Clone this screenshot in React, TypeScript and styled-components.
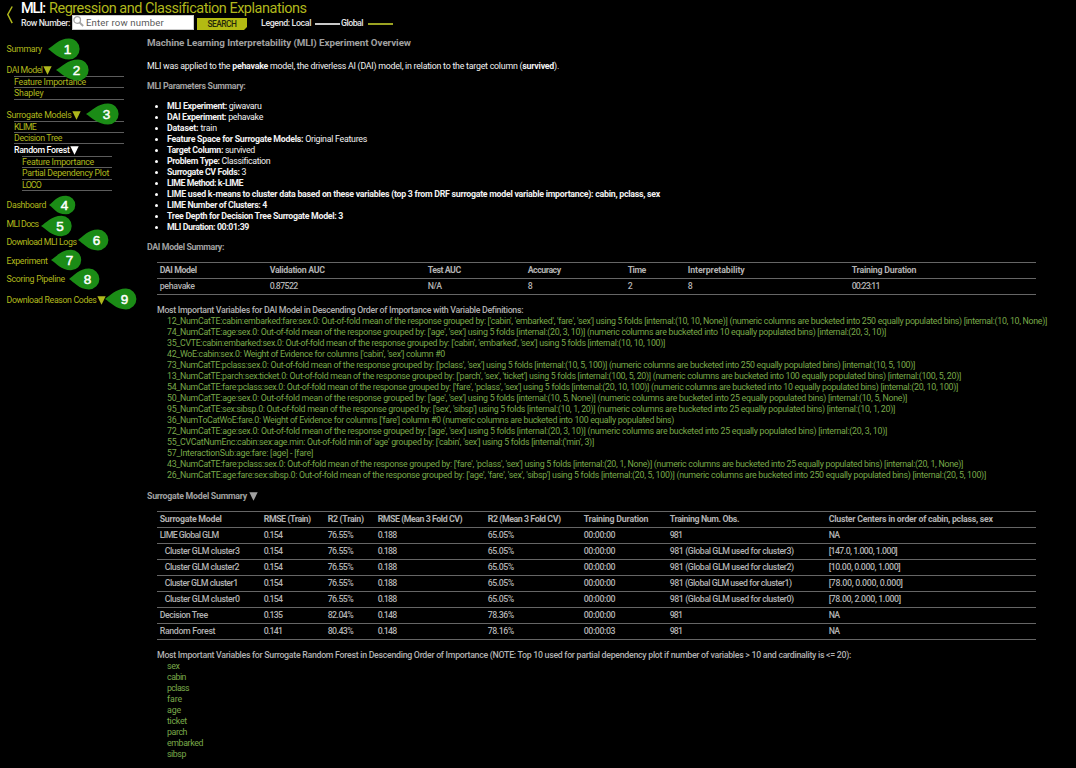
import React, { useLayoutEffect, useRef } from "react";
import styled, { createGlobalStyle } from "styled-components";

const lime = "#b0b81c";
const grey = "#b2b2b2";
const leaf = "#79a94a";

const GlobalStyle = createGlobalStyle`
  *, *::before, *::after { box-sizing: border-box; }
  html, body { margin: 0; background: #000; height: 768px; overflow: hidden; }
  body { font-family: Roboto, "Liberation Sans", sans-serif; font-size: 8.8px; color: #f2f2f2; }
`;

const Text = styled.span`
  display: inline-block;
  white-space: nowrap;
  flex: none;
`;

/* Tracks its text so that it spans the given width. */
function Fit({ w, children }: { w: number; children: React.ReactNode }) {
  const ref = useRef<HTMLSpanElement>(null);
  useLayoutEffect(() => {
    const el = ref.current;
    if (!el) return;
    el.style.letterSpacing = "0px";
    const natural = el.getBoundingClientRect().width;
    const count = Math.max(1, (el.textContent || "").length);
    el.style.letterSpacing = `${(w - natural) / count}px`;
  }, [w]);
  return <Text ref={ref}>{children}</Text>;
}

const Page = styled.div`
  width: 1076px;
  height: 768px;
  overflow: hidden;
  background: #000;
`;

const Header = styled.header`
  display: flex;
  height: 32px;
`;

const Back = styled.div`
  width: 21px;
  padding: 6px 0 0 6px;
`;

const HeaderBody = styled.div`
  display: flex;
  flex-direction: column;
`;

const Title = styled.h1`
  display: flex;
  gap: 4px;
  margin: 0;
  height: 15px;
  line-height: 18px;
  font-size: 14.5px;
  font-weight: 400;
  color: ${lime};
`;

const TitleLead = styled.span`
  color: #fff;
  font-weight: 500;
`;

const Tools = styled.div`
  display: flex;
  align-items: flex-start;
  height: 16px;
  line-height: 16px;
  font-weight: 500;
  color: #e4e4e4;
`;

const RowLabel = styled.label`
  width: 51px;
`;

const SearchBox = styled.div`
  display: flex;
  width: 122px;
  height: 15px;
  padding-left: 0;
  gap: 2px;
  background: #fff;
  border: 1px solid #ccc;
  color: #5a5a5a;
  font-size: 9.6px;
  font-weight: 400;
  line-height: 14px;
`;

const SearchButton = styled.button`
  width: 50px;
  height: 12px;
  margin: 3px 14px 0 3px;
  padding: 0;
  border: 0;
  background: #b3ba12;
  clip-path: polygon(0 0, 100% 0, 100% 9px, 47px 100%, 0 100%);
  color: #26280a;
  font: 500 8.4px/11px Roboto, sans-serif;
`;

const LegendLine = styled.span<{ $color: string; $left: number; $right: number }>`
  width: 25px;
  height: 2px;
  margin: 8px ${(p) => p.$right}px 0 ${(p) => p.$left}px;
  background: ${(p) => p.$color};
`;

const Body = styled.div`
  display: flex;
`;

const Nav = styled.nav`
  width: 147px;
  flex: none;
  color: ${lime};
`;

const NavItem = styled.div<{ $gap: number }>`
  position: relative;
  display: flex;
  align-items: center;
  height: 10px;
  margin: ${(p) => p.$gap}px 0 0 6.5px;
  line-height: 10px;
`;

const SubMenu = styled.div<{ $depth: number }>`
  width: ${(p) => (p.$depth === 1 ? 110 : 90)}px;
  margin: ${(p) => (p.$depth === 1 ? "1px 0 0 14px" : "0 0 0 8px")};
  border-top: 1px solid #5c5c5c;
`;

const SubItem = styled.div<{ $h: number; $active?: boolean }>`
  display: flex;
  height: ${(p) => p.$h}px;
  line-height: ${(p) => (p.$active ? 12 : 10)}px;
  align-items: ${(p) => (p.$active ? "center" : "flex-start")};
  border-bottom: ${(p) => (p.$active ? "0" : "1px solid #5c5c5c")};
  color: ${(p) => (p.$active ? "#fff" : "inherit")};
  font-weight: ${(p) => (p.$active ? 500 : 400)};
`;

const MarkerSvg = styled.svg<{ $x: number; $y: number }>`
  position: absolute;
  left: ${(p) => p.$x - 6.5}px;
  top: ${(p) => p.$y}px;
  z-index: 1;
  overflow: visible;
  font-family: "Liberation Sans", sans-serif;
`;

const Arrow = styled.svg`
  display: block;
  flex: none;
`;

function Caret() {
  return (
    <Arrow width="9" height="9" viewBox="0 0 9 9">
      <path d="M0.3 0.3H8.7L4.5 8.8Z" fill="currentColor" />
    </Arrow>
  );
}

/* Numbered teardrop; y is the offset from the row's middle, reach the tip-to-centre distance. */
function Marker({ n, x, y = 0, reach = 21, r = 10.6 }: { n: number; x: number; y?: number; reach?: number; r?: number }) {
  const c = 11;
  return (
    <MarkerSvg $x={x} $y={5 - c + y} width="33" height="22">
      <path
        d={`M0 ${c}C5 ${c - 3} ${reach - 10} ${c - r} ${reach} ${c - r}A${r} ${r} 0 0 1 ${reach} ${c + r}C${reach - 10} ${c + r} 5 ${c + 3} 0 ${c}Z`}
        fill="#1b8c16"
      />
      <text x={reach - 1.5} y={c + 4.9} textAnchor="middle" fontSize="13.5" fill="#fff" stroke="#fff" strokeWidth="0.5">
        {n}
      </text>
    </MarkerSvg>
  );
}

const Main = styled.main`
  flex: 1;
  min-width: 0;
`;

const Heading = styled.h2<{ $top: number; $size?: number }>`
  display: flex;
  align-items: center;
  gap: 2px;
  height: 12px;
  margin: ${(p) => p.$top}px 0 0;
  line-height: 12px;
  font-size: ${(p) => p.$size ?? 8.8}px;
  font-weight: 700;
  color: #a0a0a0;
`;

const Paragraph = styled.p`
  height: 12px;
  margin: 11px 0 0;
  line-height: 12px;
`;

const Params = styled.ul`
  margin: 9px 0 0;
  padding: 0;
  list-style: none;
`;

const Param = styled.li`
  display: flex;
  align-items: center;
  height: 11px;
  padding-left: 8px;
  line-height: 11px;

  &::before {
    content: "";
    width: 3px;
    height: 3px;
    margin-right: 9px;
    border-radius: 50%;
    background: #fff;
  }
`;

const Table = styled.div<{ $top: number }>`
  width: 879px;
  margin: ${(p) => p.$top}px 0 0 10px;
  border-top: 1px solid #666;
`;

const Row = styled.div<{ $cols: string; $head?: boolean }>`
  display: grid;
  grid-template-columns: ${(p) => p.$cols};
  height: 16px;
  padding-left: 2.7px;
  border-bottom: 1px solid #666;
  line-height: 14px;
  color: ${grey};
  font-weight: ${(p) => (p.$head ? 700 : 500)};
`;

const Cell = styled.div<{ $indent?: boolean }>`
  padding-left: ${(p) => (p.$indent ? 5 : 0)}px;
`;

const Note = styled.div<{ $top: number }>`
  height: 11px;
  margin: ${(p) => p.$top}px 0 0 10px;
  line-height: 10px;
  font-weight: 500;
  color: ${grey};
`;

const Variable = styled.div`
  height: 11px;
  margin-left: 20px;
  line-height: 10px;
  color: ${leaf};
`;

type Pair = [string, number];

const params: [string, string, number][] = [
  ["MLI Experiment:", " giwavaru", 94.5],
  ["DAI Experiment:", " pehavake", 96],
  ["Dataset:", " train", 50],
  ["Feature Space for Surrogate Models:", " Original Features", 200],
  ["Target Column:", " survived", 88],
  ["Problem Type:", " Classification", 103],
  ["Surrogate CV Folds:", " 3", 79],
  ["LIME Method: k-LIME", "", 76],
  ["LIME used k-means to cluster data based on these variables (top 3 from DRF surrogate model variable importance): cabin, pclass, sex", "", 493],
  ["LIME Number of Clusters: 4", "", 100],
  ["Tree Depth for Decision Tree Surrogate Model: 3", "", 176],
  ["MLI Duration: 00:01:39", "", 82],
];

const daiCols = "110px 158px 100px 100px 60px 164px 1fr";
const daiHead: Pair[] = [["DAI Model", 37], ["Validation AUC", 55], ["Test AUC", 33], ["Accuracy", 33], ["Time", 18], ["Interpretability", 57], ["Training Duration", 64.5]];
const daiRow: Pair[] = [["pehavake", 35], ["0.87522", 28], ["N/A", 14], ["8", 5], ["2", 5], ["8", 5], ["00:23:11", 28]];

const definitions: Pair[] = [
  ["12_NumCatTE:cabin:embarked:fare:sex.0: Out-of-fold mean of the response grouped by: ['cabin', 'embarked', 'fare', 'sex'] using 5 folds [internal:(10, 10, None)] (numeric columns are bucketed into 250 equally populated bins) [internal:(10, 10, None)]", 880],
  ["74_NumCatTE:age:sex.0: Out-of-fold mean of the response grouped by: ['age', 'sex'] using 5 folds [internal:(20, 3, 10)] (numeric columns are bucketed into 10 equally populated bins) [internal:(20, 3, 10)]", 719],
  ["35_CVTE:cabin:embarked:sex.0: Out-of-fold mean of the response grouped by: ['cabin', 'embarked', 'sex'] using 5 folds [internal:(10, 10, 100)]", 498],
  ["42_WoE:cabin:sex.0: Weight of Evidence for columns ['cabin', 'sex'] column #0", 278],
  ["73_NumCatTE:pclass:sex.0: Out-of-fold mean of the response grouped by: ['pclass', 'sex'] using 5 folds [internal:(10, 5, 100)] (numeric columns are bucketed into 250 equally populated bins) [internal:(10, 5, 100)]", 748],
  ["13_NumCatTE:parch:sex:ticket.0: Out-of-fold mean of the response grouped by: ['parch', 'sex', 'ticket'] using 5 folds [internal:(100, 5, 20)] (numeric columns are bucketed into 100 equally populated bins) [internal:(100, 5, 20)]", 794],
  ["54_NumCatTE:fare:pclass:sex.0: Out-of-fold mean of the response grouped by: ['fare', 'pclass', 'sex'] using 5 folds [internal:(20, 10, 100)] (numeric columns are bucketed into 10 equally populated bins) [internal:(20, 10, 100)]", 791],
  ["50_NumCatTE:age:sex.0: Out-of-fold mean of the response grouped by: ['age', 'sex'] using 5 folds [internal:(10, 5, None)] (numeric columns are bucketed into 25 equally populated bins) [internal:(10, 5, None)]", 740],
  ["95_NumCatTE:sex:sibsp.0: Out-of-fold mean of the response grouped by: ['sex', 'sibsp'] using 5 folds [internal:(10, 1, 20)] (numeric columns are bucketed into 25 equally populated bins) [internal:(10, 1, 20)]", 728],
  ["36_NumToCatWoE:fare.0: Weight of Evidence for columns ['fare'] column #0 (numeric columns are bucketed into 100 equally populated bins)", 507],
  ["72_NumCatTE:age:sex.0: Out-of-fold mean of the response grouped by: ['age', 'sex'] using 5 folds [internal:(20, 3, 10)] (numeric columns are bucketed into 25 equally populated bins) [internal:(20, 3, 10)]", 720],
  ["55_CVCatNumEnc:cabin:sex:age.min: Out-of-fold min of 'age' grouped by: ['cabin', 'sex'] using 5 folds [internal:('min', 3)]", 427],
  ["57_InteractionSub:age:fare: [age] - [fare]", 146],
  ["43_NumCatTE:fare:pclass:sex.0: Out-of-fold mean of the response grouped by: ['fare', 'pclass', 'sex'] using 5 folds [internal:(20, 1, None)] (numeric columns are bucketed into 25 equally populated bins) [internal:(20, 1, None)]", 796],
  ["26_NumCatTE:age:fare:sex:sibsp.0: Out-of-fold mean of the response grouped by: ['age', 'fare', 'sex', 'sibsp'] using 5 folds [internal:(20, 5, 100)] (numeric columns are bucketed into 250 equally populated bins) [internal:(20, 5, 100)]", 819],
];

const surCols = "104px 64px 50px 110px 96px 86px 159px 1fr";
const surHead: Pair[] = [["Surrogate Model", 62], ["RMSE (Train)", 47], ["R2 (Train)", 36], ["RMSE (Mean 3 Fold CV)", 84.5], ["R2 (Mean 3 Fold CV)", 73], ["Training Duration", 64.5], ["Training Num. Obs.", 69.5], ["Cluster Centers in order of cabin, pclass, sex", 164]];

const surRow = (name: Pair, scores: string[], duration: string, obs: Pair, centers: Pair): Pair[] => [
  name, [scores[0], 18.5], [scores[1], 25.5], [scores[2], 19], [scores[3], 26], [duration, 31.5], obs, centers,
];
const glm = ["0.154", "76.55%", "0.188", "65.05%"];
const surRows: Pair[][] = [
  surRow(["LIME Global GLM", 59], glm, "00:00:00", ["981", 12.5], ["NA", 10.5]),
  surRow(["Cluster GLM cluster3", 75], glm, "00:00:00", ["981 (Global GLM used for cluster3)", 124], ["[147.0, 1.000, 1.000]", 68.5]),
  surRow(["Cluster GLM cluster2", 74.5], glm, "00:00:00", ["981 (Global GLM used for cluster2)", 124], ["[10.00, 0.000, 1.000]", 71.5]),
  surRow(["Cluster GLM cluster1", 73], glm, "00:00:00", ["981 (Global GLM used for cluster1)", 122], ["[78.00, 0.000, 0.000]", 74]),
  surRow(["Cluster GLM cluster0", 75], glm, "00:00:00", ["981 (Global GLM used for cluster0)", 124], ["[78.00, 2.000, 1.000]", 72]),
  surRow(["Decision Tree", 48], ["0.135", "82.04%", "0.148", "78.36%"], "00:00:00", ["981", 12.5], ["NA", 10.5]),
  surRow(["Random Forest", 55.5], ["0.141", "80.43%", "0.148", "78.16%"], "00:00:03", ["981", 12.5], ["NA", 10.5]),
];

const forest: Pair[] = [["sex", 12.5], ["cabin", 19], ["pclass", 22], ["fare", 15], ["age", 14], ["ticket", 20], ["parch", 20], ["embarked", 36], ["sibsp", 19]];

function Cells({ items }: { items: Pair[] }) {
  return (
    <>
      {items.map(([t, w], i) => (
        <Cell key={i} $indent={t.startsWith("Cluster GLM")}>
          <Fit w={w}>{t}</Fit>
        </Cell>
      ))}
    </>
  );
}

export default function App() {
  return (
    <Page>
      <GlobalStyle />
      <Header>
        <Back>
          <svg width="8" height="19" viewBox="0 0 8 19">
            <path d="M6.2 0.5L1.8 8.5L6.2 17.2" fill="none" stroke={lime} strokeWidth="1.5" />
          </svg>
        </Back>
        <HeaderBody>
          <Title>
            <TitleLead><Fit w={24}>MLI:</Fit></TitleLead>
            <Fit w={257}>Regression and Classification Explanations</Fit>
          </Title>
          <Tools>
            <RowLabel><Fit w={49}>Row Number:</Fit></RowLabel>
            <SearchBox>
              <svg width="11" height="12" viewBox="0 0 11 12">
                <circle cx="4.2" cy="4" r="3.3" fill="none" stroke="#a5a5a5" strokeWidth="1.3" />
                <path d="M6.6 6.5L10.2 10" stroke="#a5a5a5" strokeWidth="1.8" />
              </svg>
              <Fit w={78}>Enter row number</Fit>
            </SearchBox>
            <SearchButton><Fit w={29}>SEARCH</Fit></SearchButton>
            <Fit w={50}>Legend: Local</Fit>
            <LegendLine $color="#c8c8c8" $left={4} $right={1} />
            <Fit w={22}>Global</Fit>
            <LegendLine $color="#9ba322" $left={5} $right={0} />
          </Tools>
        </HeaderBody>
      </Header>
      <Body>
        <Nav>
          <NavItem $gap={12}><Fit w={35.5}>Summary</Fit><Marker n={1} x={48} /></NavItem>
          <NavItem $gap={11}><Fit w={36}>DAI Model</Fit><Caret /><Marker n={2} x={56} y={-0.5} reach={22} /></NavItem>
          <SubMenu $depth={1}>
            <SubItem $h={11}><Fit w={72}>Feature Importance</Fit></SubItem>
            <SubItem $h={12}><Fit w={29.5}>Shapley</Fit></SubItem>
          </SubMenu>
          <NavItem $gap={10}><Fit w={65}>Surrogate Models</Fit><Caret /><Marker n={3} x={86} y={-1.5} reach={22} /></NavItem>
          <SubMenu $depth={1}>
            <SubItem $h={11}><Fit w={22}>KLIME</Fit></SubItem>
            <SubItem $h={11}><Fit w={48}>Decision Tree</Fit></SubItem>
            <SubItem $h={12} $active><Fit w={55.5}>Random Forest</Fit><Caret /></SubItem>
            <SubMenu $depth={2}>
              <SubItem $h={11}><Fit w={72}>Feature Importance</Fit></SubItem>
              <SubItem $h={12}><Fit w={87}>Partial Dependency Plot</Fit></SubItem>
              <SubItem $h={11}><Fit w={19}>LOCO</Fit></SubItem>
            </SubMenu>
          </SubMenu>
          <NavItem $gap={9}><Fit w={39.5}>Dashboard</Fit><Marker n={4} x={49} reach={17} r={9.3} /></NavItem>
          <NavItem $gap={9}><Fit w={32}>MLI Docs</Fit><Marker n={5} x={41} y={2} reach={20.5} r={10.2} /></NavItem>
          <NavItem $gap={8}><Fit w={70}>Download MLI Logs</Fit><Marker n={6} x={78} y={-2} reach={20} r={10.4} /></NavItem>
          <NavItem $gap={9}><Fit w={41}>Experiment</Fit><Marker n={7} x={51} y={-1.5} reach={20} r={10.2} /></NavItem>
          <NavItem $gap={8}><Fit w={58.5}>Scoring Pipeline</Fit><Marker n={8} x={69} y={-0.5} reach={20} r={10.4} /></NavItem>
          <NavItem $gap={11}><Fit w={90}>Download Reason Codes</Fit><Caret /><Marker n={9} x={105} y={-1.5} reach={21} r={10.4} /></NavItem>
        </Nav>
        <Main>
          <Heading $top={5} $size={9.8}><Fit w={264}>Machine Learning Interpretability (MLI) Experiment Overview</Fit></Heading>
          <Paragraph>
            <Fit w={412}>
              MLI was applied to the <b>pehavake</b> model, the driverless AI (DAI) model, in relation to the target column (<b>survived</b>).
            </Fit>
          </Paragraph>
          <Heading $top={8}><Fit w={98.5}>MLI Parameters Summary:</Fit></Heading>
          <Params>
            {params.map(([label, value, w]) => (
              <Param key={label}><Fit w={w}><b>{label}</b>{value}</Fit></Param>
            ))}
          </Params>
          <Heading $top={8}><Fit w={77}>DAI Model Summary:</Fit></Heading>
          <Table $top={9}>
            <Row $cols={daiCols} $head><Cells items={daiHead} /></Row>
            <Row $cols={daiCols}><Cells items={daiRow} /></Row>
          </Table>
          <Note $top={10}><Fit w={366}>Most Important Variables for DAI Model in Descending Order of Importance with Variable Definitions:</Fit></Note>
          {definitions.map(([t, w]) => (
            <Variable key={t}><Fit w={w}>{t}</Fit></Variable>
          ))}
          <Heading $top={9}><Fit w={100}>Surrogate Model Summary</Fit><Caret /></Heading>
          <Table $top={9}>
            <Row $cols={surCols} $head><Cells items={surHead} /></Row>
            {surRows.map((r) => (
              <Row key={r[0][0]} $cols={surCols}><Cells items={r} /></Row>
            ))}
          </Table>
          <Note $top={10}><Fit w={694}>Most Important Variables for Surrogate Random Forest in Descending Order of Importance (NOTE: Top 10 used for partial dependency plot if number of variables &gt; 10 and cardinality is &lt;= 20):</Fit></Note>
          {forest.map(([t, w]) => (
            <Variable key={t}><Fit w={w}>{t}</Fit></Variable>
          ))}
        </Main>
      </Body>
    </Page>
  );
}
